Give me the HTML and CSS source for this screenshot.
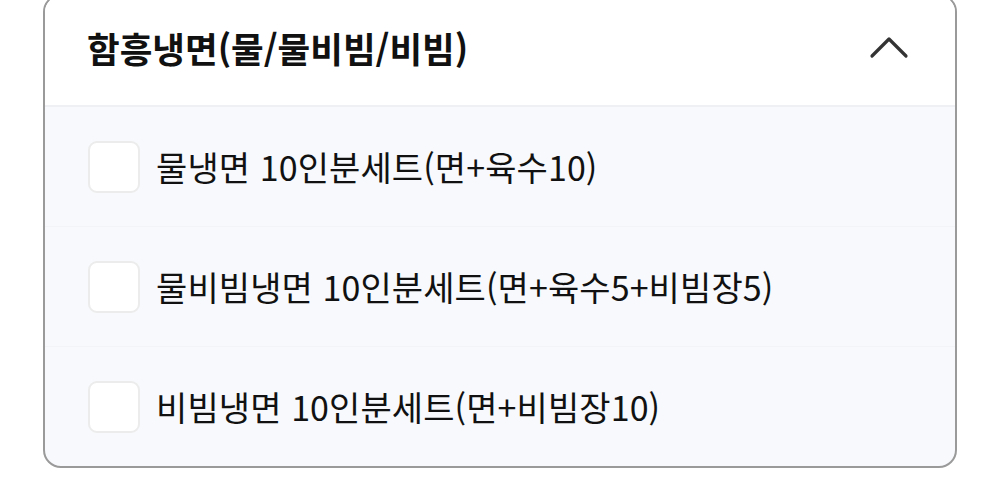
FILE: index.html
```html
<!DOCTYPE html>
<html lang="ko">
<head>
  <meta charset="UTF-8" />
  <title>메뉴 옵션</title>
  <link rel="stylesheet" href="styles.css">
</head>
<body>

  <div class="option-group">
    <div class="group-head">
      <h2>함흥냉면(물/물비빔/비빔)</h2>
      <svg class="chevron" width="40" height="24" viewBox="0 0 40 24">
        <path d="M3 21 L20 4 L37 21" fill="none" stroke="#333" stroke-width="3.2" stroke-linecap="round" stroke-linejoin="round"/>
      </svg>
    </div>

    <ul class="option-list">
      <li class="option">
        <span class="check"></span>
        <span class="label">물냉면 10인분세트(면+육수10)</span>
      </li>
      <li class="option">
        <span class="check"></span>
        <span class="label">물비빔냉면 10인분세트(면+육수5+비빔장5)</span>
      </li>
      <li class="option">
        <span class="check"></span>
        <span class="label">비빔냉면 10인분세트(면+비빔장10)</span>
      </li>
    </ul>
  </div>

</body>
</html>
```

FILE: styles.css
```css
body {
  margin: 0;
  background: #fff;
  font-family: "Noto Sans CJK KR", "Noto Sans", sans-serif;
  color: #111;
}

.option-group {
  margin: -6px 0 0 43px;
  width: 910px;
  border: 2px solid #9a9a9a;
  border-radius: 18px;
  overflow: hidden;
  background: #f7f9fc;
}

.group-head {
  height: 111px;
  display: flex;
  align-items: center;
  justify-content: space-between;
  padding: 0 46px 6px 42px;
  box-sizing: border-box;
  background: #fff;
  border-bottom: 2px solid #eef0f3;
}

.group-head h2 {
  margin: 0;
  font-size: 35.5px;
  font-weight: 700;
  letter-spacing: 0;
}

.chevron {
  display: block;
  margin-top: -2px;
}

.option-list {
  list-style: none;
  margin: 0;
  padding: 0;
}

.option {
  height: 119px;
  display: flex;
  align-items: center;
  gap: 16px;
  padding-left: 43px;
  border-top: 1px solid #f2f4f7;
}

.option:first-child {
  border-top: none;
}

.check {
  width: 48px;
  height: 48px;
  border: 2px solid #ececec;
  border-radius: 9px;
  background: #fff;
}

.label {
  font-size: 34px;
  font-weight: 400;
  letter-spacing: 0.1px;
}
```
